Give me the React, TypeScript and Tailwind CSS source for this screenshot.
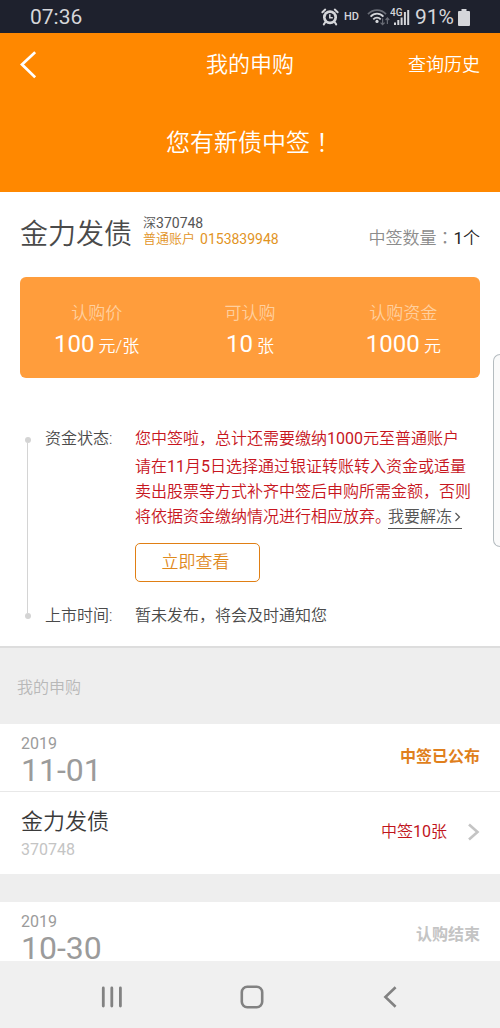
import type { ReactNode } from "react";

function AlarmIcon() {
  return (
    <svg width="18" height="18" viewBox="0 0 18 18" fill="none" aria-hidden="true">
      <circle cx="9" cy="9.2" r="7" fill="#d5d6da" />
      <circle cx="9" cy="9.2" r="4.3" fill="#1e212d" />
      <path d="M8.8 6.2v3.6h3" stroke="#d5d6da" strokeWidth="1.5" />
      <path d="M1.4 4.2 4.2 1.6M16.6 4.2 13.8 1.6" stroke="#d5d6da" strokeWidth="2" strokeLinecap="round" />
      <path d="m4.4 14-1.6 2.4M13.6 14l1.6 2.4" stroke="#d5d6da" strokeWidth="2" strokeLinecap="round" />
    </svg>
  );
}

function WifiIcon() {
  return (
    <svg width="23" height="18" viewBox="0 0 23 18" fill="none" aria-hidden="true">
      <path d="M1 6.2C6 .8 14 .8 19 6.2" stroke="#686b75" strokeWidth="1.8" />
      <path d="M3.6 8.7c3.7-4 9.1-4 12.8 0" stroke="#d5d6da" strokeWidth="1.8" />
      <path d="M6.3 11.3c2.2-2.3 5.2-2.3 7.4 0" stroke="#d5d6da" strokeWidth="1.8" />
      <circle cx="10" cy="13.4" r="1.6" fill="#d5d6da" />
      <path d="M15.6 10.5v6M13.6 14.6l2 2 2-2M20.4 16v-6M18.6 12l1.8-2 1.8 2" stroke="#686b75" strokeWidth="1.2" />
    </svg>
  );
}

function SignalIcon() {
  return (
    <svg width="20" height="20" viewBox="0 0 20 20" aria-hidden="true">
      <text x="0" y="9" fill="#d5d6da" fontSize="10" fontWeight="500" fontFamily="Roboto, sans-serif">4G</text>
      <path d="M4 15.5h2V18H4zM7.3 13h2v5h-2zM10.6 10.5h2V18h-2zM13.9 5h2v13h-2zM17.2 3h2v15h-2z" fill="#d5d6da" />
    </svg>
  );
}

function BatteryIcon() {
  return (
    <svg width="12" height="17" viewBox="0 0 12 17" fill="#d5d6da" aria-hidden="true">
      <path d="M3.5 0h5v2H11a1 1 0 0 1 1 1v13a1 1 0 0 1-1 1H1a1 1 0 0 1-1-1V3a1 1 0 0 1 1-1h2.5z" />
    </svg>
  );
}

function StatusBar() {
  return (
    <div className="flex h-[33px] shrink-0 items-center bg-[#1e212d] px-[30px] pt-px text-[#d5d6da]">
      <span className="text-[21px] leading-6">07:36</span>
      <div className="ml-auto flex items-center">
        <AlarmIcon />
        <span className="ml-[5px] text-[11px] leading-4 font-medium">HD</span>
        <span className="ml-2">
          <WifiIcon />
        </span>
        <span>
          <SignalIcon />
        </span>
        <span className="ml-[5px] text-[21px] leading-6">91%</span>
        <span className="ml-1">
          <BatteryIcon />
        </span>
      </div>
    </div>
  );
}

/* Punctuation set in the middle of its cell */
function Centered({ children }: { children: ReactNode }) {
  return (
    <span lang="ja" className="font-['Noto_Sans_CJK_JP',sans-serif] leading-none">
      {children}
    </span>
  );
}

/* Digits at regular weight inside the lighter Chinese text */
function Num({ children }: { children: ReactNode }) {
  return <span className="font-normal">{children}</span>;
}

function Header() {
  return (
    <header className="shrink-0 bg-[#ff8800] font-[350] text-white">
      <div className="grid h-16 grid-cols-[1fr_auto_1fr] items-center px-5">
        <button type="button" aria-label="返回" className="justify-self-start">
          <svg width="16" height="28" viewBox="0 0 16 28" fill="none" stroke="#fff" strokeWidth="2.8" aria-hidden="true">
            <path d="M15.2 1.2 2 13.5l13.2 12.8" />
          </svg>
        </button>
        <h1 className="text-[22px] leading-8">我的申购</h1>
        <a href="#history" className="justify-self-end text-[18px] leading-8">
          查询历史
        </a>
      </div>
      <p className="pt-7 pb-[31px] text-center text-[24px] leading-9">
        您有新债中签<Centered>！</Centered>
      </p>
    </header>
  );
}

const figures = [
  { label: "认购价", value: "100", unit: "元/张" },
  { label: "可认购", value: "10", unit: "张" },
  { label: "认购资金", value: "1000", unit: "元" },
];

function BondSummary() {
  return (
    <div className="px-5 pt-[21px]">
      <div className="flex items-start">
        <h2 className="text-[28px] leading-[44px] font-[350] text-[#4a4a4a]">金力发债</h2>
        <div className="mt-[2px] ml-[11px] text-[13px] leading-4 font-[350]">
          <p className="flex text-[#555555]">
            深<span className="text-[14px] font-normal">370748</span>
          </p>
          <p className="flex gap-[5px] text-[#e2941f]">
            普通账户 <span className="text-[14px] font-normal">0153839948</span>
          </p>
        </div>
        <p className="mt-[13px] ml-auto text-[17px] leading-6 font-[350] text-[#8c8c8c]">
          中签数量<Centered>：</Centered>
          <span className="text-[#222222]">
            <Num>1</Num>个
          </span>
        </p>
      </div>
      <dl className="mt-5 grid grid-cols-3 rounded-md bg-[#ff9d3c] pt-6 pb-[17px] text-center text-white">
        {figures.map((f) => (
          <div key={f.label}>
            <dt className="text-[17px] leading-6 font-[350] text-[#ffcf9e]">{f.label}</dt>
            <dd className="mt-1 text-[17px] leading-[30px] font-[350]">
              <span className="text-[24px] font-normal">{f.value}</span> {f.unit}
            </dd>
          </div>
        ))}
      </dl>
    </div>
  );
}

function Timeline() {
  return (
    <div className="flex pt-12 pr-5 pb-[18px] pl-6 text-[16px] leading-[25px] font-[350] text-[#4a4a4a]">
      <div className="flex w-[7px] flex-col items-center pt-[11px] pb-[9px]">
        <span className="size-[6px] rounded-full bg-[#d4d4d4]" />
        <span className="w-px flex-1 bg-[#d4d4d4]" />
        <span className="size-[6px] rounded-full bg-[#d4d4d4]" />
      </div>
      <dl className="grid flex-1 grid-cols-[90px_1fr] pl-[14px]">
        <dt>资金状态:</dt>
        <dd className="text-[#c7161e]">
          <p>
            您中签啦，总计还需要缴纳<Num>1000</Num>元至普通账户
          </p>
          <p className="mt-[3px]">
            请在<Num>11</Num>月<Num>5</Num>日选择通过银证转账转入资金或适量
            <br />
            卖出股票等方式补齐中签后申购所需金额，否则
            <br />
            将依据资金缴纳情况进行相应放弃。
            <a href="#unfreeze" className="ml-[-3px] inline-flex items-center border-b border-[#555555] leading-[22px] text-[#555555]">
              我要解冻
              <svg width="10" height="12" viewBox="0 0 10 12" fill="none" stroke="#555" strokeWidth="1.2" aria-hidden="true">
                <path d="m3.5 2 4 4-4 4" />
              </svg>
            </a>
          </p>
          <button
            type="button"
            className="mt-[14px] mb-[21px] block h-[39px] w-[125px] rounded-[5px] border border-[#e07f14] pr-1 text-[17px] text-[#e08a1e]"
          >
            立即查看
          </button>
        </dd>
        <dt>上市时间:</dt>
        <dd>暂未发布，将会及时通知您</dd>
      </dl>
    </div>
  );
}

function DateRow({ year, day, children }: { year: string; day: string; children: ReactNode }) {
  return (
    <div className="flex items-start justify-between px-5 pt-3 pb-[3px]">
      <div className="pl-px text-[#9b9b9b]">
        <p className="text-[16px] leading-4">{year}</p>
        <p className="text-[32px] leading-9">{day}</p>
      </div>
      <div className="pt-[9px] text-[16px] leading-6 font-bold">{children}</div>
    </div>
  );
}

function Subscriptions() {
  return (
    <section className="bg-[#eeeeee]">
      <h2 className="px-[17px] pt-7 pb-6 text-[16px] leading-6 font-[350] text-[#b8b8b8]">我的申购</h2>
      <div className="bg-white">
        <div className="border-b border-[#e8e8e8]">
          <DateRow year="2019" day="11-01">
            <span className="text-[#e07f1c]">中签已公布</span>
          </DateRow>
        </div>
        <a href="#370748" className="flex items-center pt-3 pr-5 pb-[14px] pl-[21px]">
          <div className="flex-1">
            <p className="text-[22px] leading-9 font-[350] text-[#3a3a3a]">金力发债</p>
            <p className="text-[16px] leading-5 text-[#c4c4c4]">370748</p>
          </div>
          <span className="text-[16px] leading-6 font-[350] text-[#c0141c]">
            中签<Num>10</Num>张
          </span>
          <svg className="ml-5" width="13" height="18" viewBox="0 0 13 18" fill="none" stroke="#c4c4c4" strokeWidth="2.6" aria-hidden="true">
            <path d="m2 1.5 8.5 7.5L2 16.5" />
          </svg>
        </a>
      </div>
      <div className="mt-7 bg-white">
        <DateRow year="2019" day="10-30">
          <span className="text-[#c4c4c4]">认购结束</span>
        </DateRow>
      </div>
    </section>
  );
}

function NavBar() {
  return (
    <nav className="flex h-[67px] shrink-0 items-center justify-between bg-[#f0f0f0] px-[100px] pt-1">
      <button type="button" aria-label="最近">
        <svg width="24" height="24" viewBox="0 0 24 24" fill="none" stroke="#828282" strokeWidth="2.8" strokeLinecap="round" aria-hidden="true">
          <path d="M3.3 3v18M11.8 3v18M20.4 3v18" />
        </svg>
      </button>
      <button type="button" aria-label="主页">
        <svg width="24" height="24" viewBox="0 0 24 24" fill="none" stroke="#828282" strokeWidth="2.6" aria-hidden="true">
          <rect x="1.8" y="1.8" width="20.4" height="20.4" rx="5.5" />
        </svg>
      </button>
      <button type="button" aria-label="后退">
        <svg width="20" height="24" viewBox="0 0 20 24" fill="none" stroke="#828282" strokeWidth="2.6" aria-hidden="true">
          <path d="M15.6 2.2 5.4 12l10.2 9.8" />
        </svg>
      </button>
    </nav>
  );
}

export default function App() {
  return (
    <div className="relative flex h-screen flex-col overflow-hidden bg-white font-[Roboto,'Noto_Sans_CJK_SC',sans-serif]">
      <StatusBar />
      <Header />
      <main className="min-h-0 flex-1 overflow-y-auto [scrollbar-width:none]">
        <section className="border-b-2 border-[#dddddd]">
          <BondSummary />
          <Timeline />
        </section>
        <Subscriptions />
      </main>
      <NavBar />
      <div className="absolute top-[354px] right-0 h-[193px] w-[7px] rounded-l-lg border border-r-0 border-[#b5bcc0] bg-[#fafafa]" />
    </div>
  );
}
